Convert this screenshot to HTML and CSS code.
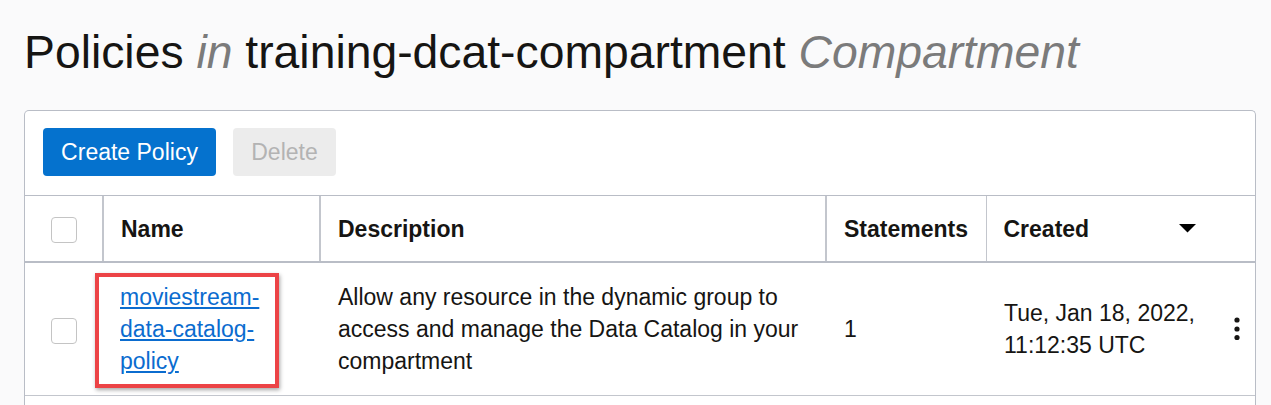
FILE: index.html
```html
<!DOCTYPE html>
<html>
<head>
<meta charset="utf-8">
<link rel="stylesheet" href="styles.css">
</head>
<body>
<div class="page">
  <h1 class="title">Policies <em>in</em> training-dcat-compartment <em>Compartment</em></h1>
  <div class="panel">
    <div class="toolbar">
      <button class="btn btn-primary">Create Policy</button>
      <button class="btn btn-disabled">Delete</button>
    </div>
    <table class="grid">
      <colgroup>
        <col class="c-check">
        <col class="c-name">
        <col class="c-desc">
        <col class="c-stmt">
        <col class="c-created">
      </colgroup>
      <thead>
        <tr>
          <th class="cell-check"><span class="checkbox"></span></th>
          <th>Name</th>
          <th>Description</th>
          <th>Statements</th>
          <th class="th-created">
            <div class="created-head">
              <span>Created</span>
              <svg class="sort" width="17" height="9" viewBox="0 0 17 9"><path d="M0 0H17L8.5 8.5Z" fill="#000"/></svg>
            </div>
          </th>
        </tr>
      </thead>
      <tbody>
        <tr>
          <td class="cell-check"><span class="checkbox"></span></td>
          <td class="cell-name">
            <a href="#" class="link">moviestream-data-catalog-policy</a>
            <span class="highlight"></span>
          </td>
          <td>Allow any resource in the dynamic group to access and manage the Data Catalog in your compartment</td>
          <td>1</td>
          <td class="td-created">
            <div class="created-cell">
              <span class="date">Tue, Jan 18, 2022, 11:12:35 UTC</span>
              <svg class="kebab" width="6" height="24" viewBox="0 0 6 24"><circle cx="3" cy="3" r="2.6" fill="#161513"/><circle cx="3" cy="12" r="2.6" fill="#161513"/><circle cx="3" cy="20.5" r="2.6" fill="#161513"/></svg>
            </div>
          </td>
        </tr>
      </tbody>
    </table>
  </div>
</div>
</body>
</html>
```

FILE: styles.css
```css
html, body {
  margin: 0;
  padding: 0;
  background: #fafafb;
  font-family: "Liberation Sans", Arial, sans-serif;
  color: #161513;
  overflow: hidden;
}

.page {
  height: 405px;
  box-sizing: border-box;
  padding: 26px 15px 0 24px;
  display: flex;
  flex-direction: column;
}

.title {
  margin: 0 0 32px 0;
  font-size: 46.3px;
  line-height: 52px;
  font-weight: normal;
  color: #161513;
  white-space: nowrap;
}

.title em {
  color: #7b7b7b;
  font-style: italic;
}

.panel {
  flex: 1;
  min-height: 0;
  overflow: hidden;
  background: #fff;
  border: 1px solid #b9bdc6;
  border-bottom: none;
  border-radius: 5px 5px 0 0;
}

.toolbar {
  display: flex;
  gap: 17px;
  padding: 17px 18px 19px;
  border-bottom: 1px solid #b9bdc6;
}

.btn {
  height: 48px;
  border: none;
  border-radius: 4px;
  font-family: "Liberation Sans", Arial, sans-serif;
  font-size: 23px;
  padding: 0 10px;
  cursor: pointer;
}

.btn-primary {
  width: 173px;
  background: #0572ce;
  color: #fff;
}

.btn-disabled {
  width: 103px;
  background: #ececec;
  color: #b3b3b3;
}

.grid {
  width: 100%;
  border-collapse: collapse;
  table-layout: fixed;
  font-size: 23px;
  line-height: 32px;
}

.c-check { width: 78px; }
.c-name { width: 217px; }
.c-desc { width: 506px; }
.c-stmt { width: 160px; }
.c-created { width: 269px; }

.grid th {
  height: 65px;
  padding: 0 12px 0 17px;
  text-align: left;
  font-weight: bold;
  border-left: 2px solid #c3c6cd;
  border-bottom: 2px solid #b9bdc6;
  vertical-align: middle;
  white-space: nowrap;
}

.grid th:first-child {
  border-left: none;
}

.grid th.th-created {
  border-left-width: 1px;
  padding-right: 59px;
}

.grid th.cell-check,
.grid td.cell-check {
  padding: 0;
  text-align: center;
}

.grid td {
  height: 132px;
  padding: 0 17px 0 18px;
  vertical-align: middle;
  border-bottom: 1px solid #c3c6cd;
}

.grid td.cell-name {
  padding-left: 17px;
}

.checkbox {
  display: inline-block;
  width: 24px;
  height: 24px;
  border: 1px solid #c4c4c4;
  border-radius: 4px;
  background: #fff;
  vertical-align: middle;
  box-sizing: content-box;
}

.created-head {
  display: flex;
  align-items: center;
  justify-content: space-between;
}

.sort {
  display: block;
}

.cell-name {
  position: relative;
}

.link {
  color: #0b6ccf;
  text-decoration: underline;
  text-underline-offset: 2px;
}

.highlight {
  position: absolute;
  left: -8px;
  top: 10px;
  width: 176px;
  height: 107px;
  border: 4px solid #ec4346;
  box-shadow: 1px 2px 4px rgba(0, 0, 0, 0.35);
  pointer-events: none;
}

.grid td.td-created {
  padding-right: 15px;
}

.created-cell {
  display: flex;
  align-items: center;
  justify-content: space-between;
}

.date {
  width: 210px;
}

.kebab {
  display: block;
}
```
